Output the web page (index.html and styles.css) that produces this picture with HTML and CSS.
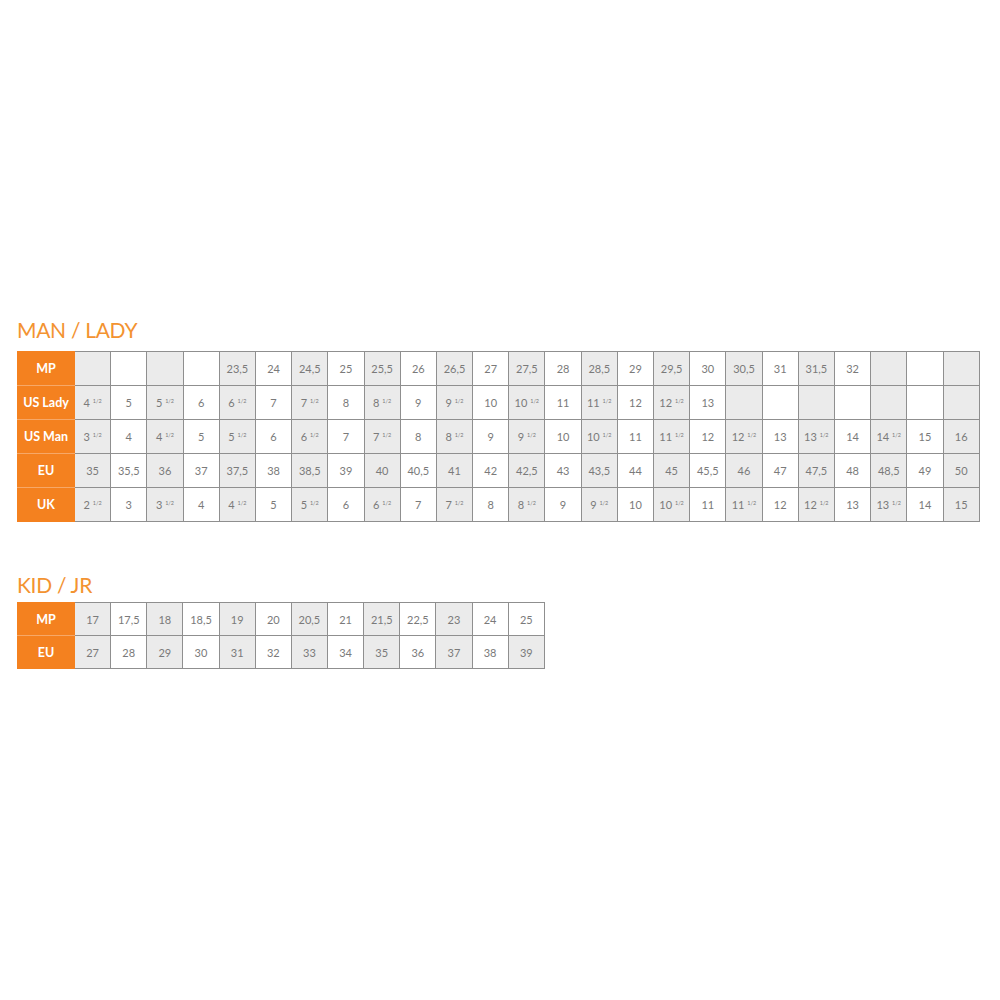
FILE: index.html
```html
<!DOCTYPE html>
<html>
<head>
<meta charset="utf-8">
<link rel="stylesheet" href="styles.css">
</head>
<body>
<main class="page">
  <section class="block block-main">
    <h2 class="title">MAN / LADY</h2>
    <table class="chart chart-main">
      <tbody>
        <tr>
          <th>MP</th>
          <td class="s"></td><td></td><td class="s"></td><td></td><td class="s">23,5</td><td>24</td><td class="s">24,5</td><td>25</td><td class="s">25,5</td><td>26</td><td class="s">26,5</td><td>27</td><td class="s">27,5</td><td>28</td><td class="s">28,5</td><td>29</td><td class="s">29,5</td><td>30</td><td class="s">30,5</td><td>31</td><td class="s">31,5</td><td>32</td><td class="s"></td><td></td><td class="s"></td>
        </tr>
        <tr>
          <th>US Lady</th>
          <td class="s">4 <sup>1/2</sup></td><td>5</td><td class="s">5 <sup>1/2</sup></td><td>6</td><td class="s">6 <sup>1/2</sup></td><td>7</td><td class="s">7 <sup>1/2</sup></td><td>8</td><td class="s">8 <sup>1/2</sup></td><td>9</td><td class="s">9 <sup>1/2</sup></td><td>10</td><td class="s">10 <sup>1/2</sup></td><td>11</td><td class="s">11 <sup>1/2</sup></td><td>12</td><td class="s">12 <sup>1/2</sup></td><td>13</td><td class="s"></td><td></td><td class="s"></td><td></td><td class="s"></td><td></td><td class="s"></td>
        </tr>
        <tr>
          <th>US Man</th>
          <td class="s">3 <sup>1/2</sup></td><td>4</td><td class="s">4 <sup>1/2</sup></td><td>5</td><td class="s">5 <sup>1/2</sup></td><td>6</td><td class="s">6 <sup>1/2</sup></td><td>7</td><td class="s">7 <sup>1/2</sup></td><td>8</td><td class="s">8 <sup>1/2</sup></td><td>9</td><td class="s">9 <sup>1/2</sup></td><td>10</td><td class="s">10 <sup>1/2</sup></td><td>11</td><td class="s">11 <sup>1/2</sup></td><td>12</td><td class="s">12 <sup>1/2</sup></td><td>13</td><td class="s">13 <sup>1/2</sup></td><td>14</td><td class="s">14 <sup>1/2</sup></td><td>15</td><td class="s">16</td>
        </tr>
        <tr>
          <th>EU</th>
          <td class="s">35</td><td>35,5</td><td class="s">36</td><td>37</td><td class="s">37,5</td><td>38</td><td class="s">38,5</td><td>39</td><td class="s">40</td><td>40,5</td><td class="s">41</td><td>42</td><td class="s">42,5</td><td>43</td><td class="s">43,5</td><td>44</td><td class="s">45</td><td>45,5</td><td class="s">46</td><td>47</td><td class="s">47,5</td><td>48</td><td class="s">48,5</td><td>49</td><td class="s">50</td>
        </tr>
        <tr>
          <th>UK</th>
          <td class="s">2 <sup>1/2</sup></td><td>3</td><td class="s">3 <sup>1/2</sup></td><td>4</td><td class="s">4 <sup>1/2</sup></td><td>5</td><td class="s">5 <sup>1/2</sup></td><td>6</td><td class="s">6 <sup>1/2</sup></td><td>7</td><td class="s">7 <sup>1/2</sup></td><td>8</td><td class="s">8 <sup>1/2</sup></td><td>9</td><td class="s">9 <sup>1/2</sup></td><td>10</td><td class="s">10 <sup>1/2</sup></td><td>11</td><td class="s">11 <sup>1/2</sup></td><td>12</td><td class="s">12 <sup>1/2</sup></td><td>13</td><td class="s">13 <sup>1/2</sup></td><td>14</td><td class="s">15</td>
        </tr>
      </tbody>
    </table>
  </section>

  <section class="block block-kid">
    <h2 class="title">KID / JR</h2>
    <table class="chart chart-kid">
      <tbody>
        <tr>
          <th>MP</th>
          <td class="s">17</td><td>17,5</td><td class="s">18</td><td>18,5</td><td class="s">19</td><td>20</td><td class="s">20,5</td><td>21</td><td class="s">21,5</td><td>22,5</td><td class="s">23</td><td>24</td><td>25</td>
        </tr>
        <tr>
          <th>EU</th>
          <td class="s">27</td><td>28</td><td class="s">29</td><td>30</td><td class="s">31</td><td>32</td><td class="s">33</td><td>34</td><td class="s">35</td><td>36</td><td class="s">37</td><td>38</td><td class="s">39</td>
        </tr>
      </tbody>
    </table>
  </section>
</main>
</body>
</html>
```

FILE: styles.css
```css
html, body {
  margin: 0;
  padding: 0;
  background: #ffffff;
}

.page {
  padding: 319px 0 0 17px;
  font-family: "Lato", "Noto Sans", sans-serif;
}

.block-kid {
  margin-top: 52px;
}

.title {
  margin: 0 0 11px 0;
  font-size: 21px;
  line-height: 21px;
  font-weight: 400;
  color: #f39331;
  letter-spacing: -0.3px;
}

.block-kid .title {
  margin-bottom: 7px;
}

.chart {
  border-collapse: collapse;
  table-layout: fixed;
}

.chart-main {
  width: 963px;
}

.chart-kid {
  width: 528px;
}

.chart th {
  width: 56px;
  padding: 0;
  background: #f4811f;
  color: #ffffff;
  font-size: 12.5px;
  font-weight: 700;
  text-align: center;
  border: 1px solid #f4811f;
  border-top-color: #f7a867;
  border-bottom-color: #f7a867;
  white-space: nowrap;
}

.chart tr:first-child th {
  border-top-color: #f4811f;
}

.chart tr:last-child th {
  border-bottom-color: #f4811f;
}

.chart td {
  padding: 0;
  border: 1px solid #8f8f8f;
  color: #7a7a7a;
  font-size: 11px;
  text-align: center;
  white-space: nowrap;
  background: #ffffff;
}

.chart td.s {
  background: #ebebeb;
}

.chart-main tr {
  height: 34px;
}

.chart-kid tr {
  height: 33px;
}

.chart sup {
  font-size: 5.5px;
  vertical-align: 4px;
  line-height: 0;
}
```
